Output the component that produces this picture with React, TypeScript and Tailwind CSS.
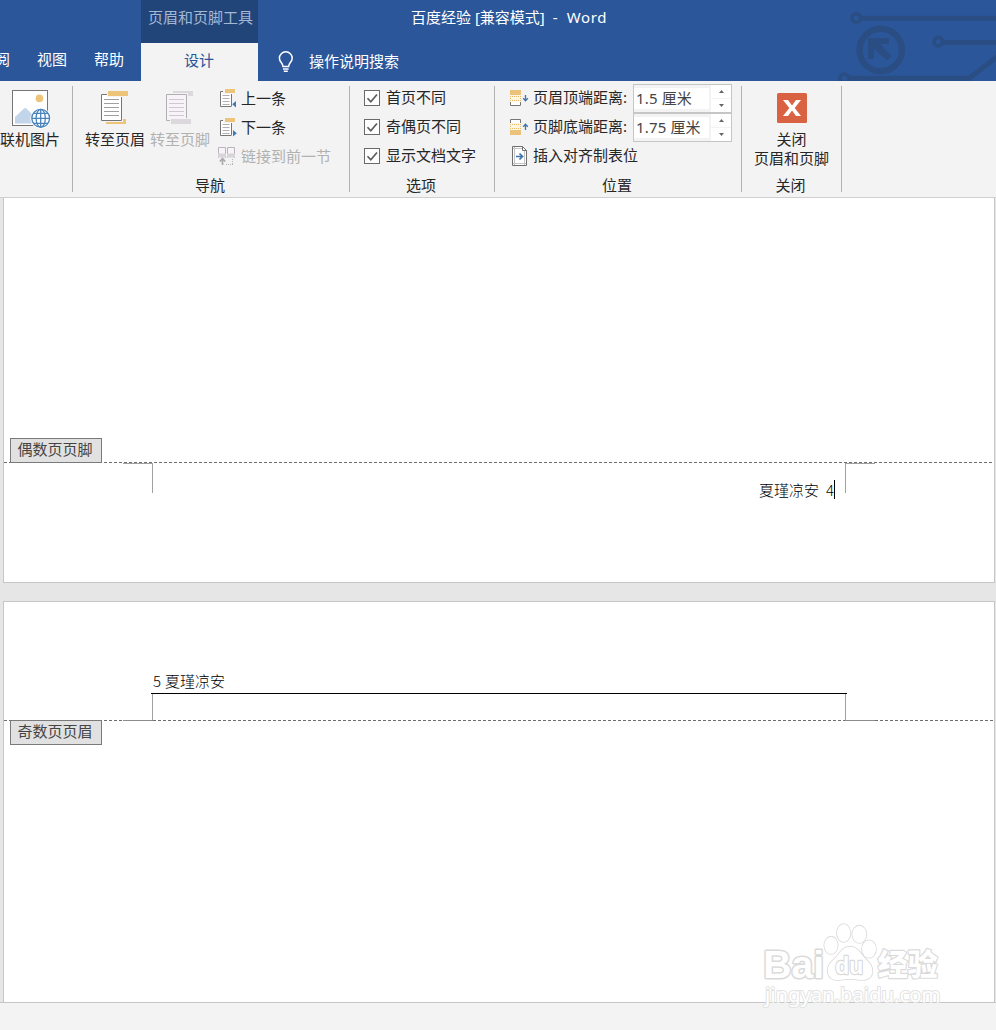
import React from "react";

const FONT = "font-['Noto_Sans','Noto_Sans_CJK_SC',sans-serif]";
const CJK = "font-light font-['Noto_Sans_CJK_SC',sans-serif]";

function Circuit() {
  return (
    <svg className="absolute right-0 top-0" width="160" height="81" viewBox="836 0 160 81" fill="none" stroke="#2a4e84">
      <circle cx="856.3" cy="18" r="4.3" strokeWidth="3.6" />
      <path d="M861 18.3H996" strokeWidth="5" />
      <circle cx="880.7" cy="50" r="21.2" strokeWidth="6.4" />
      <path d="M868 38h21v6h-8.500L891.500 56l-4.500 4.500L874 49v10h-6z" fill="#2a4e84" stroke="none" />
      <circle cx="938.3" cy="41.700" r="4.300" strokeWidth="3.600" />
      <path d="M943 42.500H996" strokeWidth="5" />
      <circle cx="844.300" cy="78.300" r="4.300" strokeWidth="3.600" />
      <path d="M849 78.200H969L998 56" strokeWidth="5" />
    </svg>
  );
}

function Bulb() {
  return (
    <svg width="16" height="22" viewBox="0 0 16 22" fill="none" stroke="#fff" strokeWidth="1.500">
      <path d="M5 15.500C5 12 1.400 11 1.400 7.200a6.400 6.400 0 0 1 12.800 0C14.200 11 10.600 12 10.600 15.500z" />
      <path d="M5 18h5.600M5.800 20.300h4" strokeWidth="1.500" />
    </svg>
  );
}

function OnlinePicture() {
  return (
    <svg width="40" height="40" viewBox="0 0 40 40" fill="none">
      <rect x=".5" y=".5" width="35" height="35" fill="#fff" stroke="#767676" />
      <circle cx="27.400" cy="8.400" r="3.800" fill="#ecc57b" />
      <path d="M3 33.500V27l9-8.500q1.200-.9 2.400 0L21 25v8.500z" fill="#c2d5ea" />
      <circle cx="28.700" cy="28.300" r="10.400" fill="#fff" />
      <g stroke="#4a84bd" strokeWidth="1.300">
        <circle cx="28.700" cy="28.300" r="8.900" />
        <ellipse cx="28.700" cy="28.300" rx="4.600" ry="8.900" />
        <path d="M28.700 19.400v17.800M19.800 28.300h17.800M21.500 23.300h14.400M21.500 33.300h14.400" />
      </g>
    </svg>
  );
}

function GotoHeader() {
  return (
    <svg width="30" height="36" viewBox="0 0 30 36" fill="none">
      <path d="M6 29h20v5H6z" fill="#ecc57b" />
      <path d="M0 3h23v29H0z" fill="#f3f3f3" />
      <path d="M1.500 4.500h20v26h-20z" fill="#fff" stroke="#767676" />
      <path d="M4 9.500h15M4 13.500h15M4 17.500h15M4 21.500h15M4 25.500h15" stroke="#a0a0a0" />
      <path d="M7 0h23v7H7z" fill="#f3f3f3" />
      <path d="M8 1h20v5H8z" fill="#ecc57b" />
    </svg>
  );
}

function GotoFooter() {
  return (
    <svg width="30" height="36" viewBox="0 0 30 36" fill="none">
      <path d="M8 1h20v5H8z" fill="#dcd8dc" />
      <path d="M0 3h23v29H0z" fill="#f3f3f3" />
      <path d="M1.500 4.500h20v26h-20z" fill="#f8f3f9" stroke="#b1aeb1" />
      <path d="M4 9.500h15M4 13.500h15M4 17.500h15M4 21.500h15M4 25.500h15" stroke="#cfc8d2" />
      <path d="M5 28h22v7H5z" fill="#f3f3f3" />
      <path d="M6 29h20v5H6z" fill="#dcd8dc" />
    </svg>
  );
}

function PageStep({ next = false }: { next?: boolean }) {
  return (
    <svg width="18" height="20" viewBox="0 0 18 20" fill="none">
      <path d="M1.500 2.500h11v15h-11z" fill="#fff" stroke="#767676" />
      <path d="M3.500 6.500h7M3.500 9.500h7M3.500 12.500h7M3.500 15.500h7" stroke="#b0b0b0" />
      <path d="M4 0h12v5H4z" fill="#f3f3f3" />
      <path d="M6 0h10v4H6z" fill="#ecc57b" />
      <path d="M12 11h5v8h-5z" fill="#f3f3f3" />
      <path d="M12.500 2.500v15" stroke="#767676" strokeDasharray="0 3 12" />
      <path d={next ? "M14 12v6.500l3.800-3.250z" : "M17 12v6.500l-3.800-3.250z"} fill="#3f7ab5" />
    </svg>
  );
}

function LinkPrevious() {
  return (
    <svg width="18" height="19" viewBox="0 0 18 19" fill="none">
      <path d="M.5 11V.5h7V11M9.500 11V.5h7V11" fill="#f8f3f9" stroke="#b9b4bb" />
      <path d="M0 6.500h8v4H0zM9 6.500h8v4H9z" fill="#d8d4d8" />
      <path d="M4.500 18v-6M1.800 14.500l2.700-3 2.700 3" stroke="#a9a9a9" strokeWidth="1.700" />
      <path d="M8 17.500h7M14.500 17v-5" stroke="#b5b5b5" strokeDasharray="1 1" />
    </svg>
  );
}

function DistanceIcon({ bottom = false }: { bottom?: boolean }) {
  return bottom ? (
    <svg width="19" height="16" viewBox="0 0 19 16" fill="none">
      <path d="M.5 4V.5h10V4" fill="#fff" stroke="#767676" />
      <path d="M0 4h11v7H0z" fill="#fff6e4" />
      <path d="M0 5.500h11M0 9.500h11M.5 5v5M10.500 5v5" stroke="#e6b866" strokeDasharray="1 1" />
      <path d="M0 11h11v5H0z" fill="#ebc27a" />
      <path d="M15.500 11V5.500M13.200 7.800l2.300-2.500 2.300 2.500" stroke="#3f74ad" strokeWidth="1.300" />
    </svg>
  ) : (
    <svg width="19" height="16" viewBox="0 0 19 16" fill="none">
      <path d="M.5 12v3.500h10V12" fill="#fff" stroke="#767676" />
      <path d="M0 5h11v7H0z" fill="#fff6e4" />
      <path d="M0 6.500h11M0 10.500h11M.5 6v5M10.500 6v5" stroke="#e6b866" strokeDasharray="1 1" />
      <path d="M0 0h11v5H0z" fill="#ebc27a" />
      <path d="M15.500 5v5.500M13.200 8.200l2.300 2.500 2.300-2.500" stroke="#3f74ad" strokeWidth="1.300" />
    </svg>
  );
}

function TabIcon() {
  return (
    <svg width="16" height="20" viewBox="0 0 16 20" fill="none">
      <path d="M.5.5h10l4 4v15H.5z" fill="#fff" stroke="#6f6f6f" />
      <path d="M10.500.5v4h4" stroke="#6f6f6f" />
      <path d="M2.500 1v18M12.500 5v14M1 2.500h9M1 17.500h13" stroke="#c4c4c4" />
      <path d="M4 10.500h6M7.500 7.500l3 3-3 3" stroke="#3f74ad" strokeWidth="1.700" />
    </svg>
  );
}

function Check({ label }: { label: string }) {
  return (
    <div className="flex h-[29px] items-center gap-[6px]">
      <svg width="16" height="16" viewBox="0 0 16 16" fill="none">
        <rect x=".5" y=".5" width="15" height="15" fill="#fff" stroke="#6a6a6a" />
        <path d="M3.500 8.200l3.300 3.600 6.200-7.300" stroke="#5c5c5c" strokeWidth="1.700" />
      </svg>
      <span>{label}</span>
    </div>
  );
}

function Spinner({ value }: { value: string }) {
  return (
    <div className="flex h-[29px] w-[99px] border border-[#c6c6c6] bg-[#f3f3f3]">
      <div className="my-[3px] flex w-[75px] items-center bg-white pb-px pl-[2px] tracking-[0.15px] text-[#444]">{value}</div>
      <div className="ml-[2px] flex flex-1 flex-col gap-px">
        <div className="flex flex-1 items-center justify-center bg-white">
          <svg width="5" height="3" viewBox="0 0 5 3"><path d="M0 3L2.500 0 5 3z" fill="#666" /></svg>
        </div>
        <div className="flex flex-1 items-center justify-center bg-white">
          <svg width="5" height="3" viewBox="0 0 5 3"><path d="M0 0L2.500 3 5 0z" fill="#666" /></svg>
        </div>
      </div>
    </div>
  );
}

function Group({ className, label, children }: { className: string; label?: string; children: React.ReactNode }) {
  return (
    <section className={`flex h-[106px] shrink-0 flex-col border-r border-[#b1b1b1] ${className}`}>
      <div className="flex h-[88px] shrink-0">{children}</div>
      <div className="mt-[2px] flex h-[19px] shrink-0 items-center justify-center pr-[2px]">{label}</div>
    </section>
  );
}

function Dashes() {
  return <div className="h-px w-full bg-[repeating-linear-gradient(90deg,#6e6e6e_0_3px,#ffffff_3px_5px)]" />;
}

function Tag({ label }: { label: string }) {
  return (
    <div className="ml-[6px] flex h-[25px] w-[92px] items-center justify-center border border-[#7a7a7a] bg-[#e1e1e1] pb-[2px] pr-[2px] text-[#444]">
      {label}
    </div>
  );
}

function Watermark() {
  return (
    <svg className="absolute left-[740px] top-[900px]" width="256" height="130" viewBox="0 0 768 390" fill="#fff" stroke="#dadada" strokeWidth="5" strokeLinejoin="round">
      <g paintOrder="stroke" fontFamily="Liberation Sans" fontWeight="700">
        <text x="70" y="234" fontSize="116" textLength="182" lengthAdjust="spacingAndGlyphs" strokeWidth="9">Bai</text>
        <ellipse cx="273" cy="136" rx="20" ry="26" />
        <ellipse cx="311" cy="99" rx="20" ry="27" />
        <ellipse cx="358" cy="103" rx="21" ry="26" />
        <ellipse cx="387" cy="147" rx="21" ry="26" />
        <path d="M330 140C352 140 362 160 374 174C386 186 398 196 397 216C395 238 374 242 356 239C338 236 322 236 304 239C284 242 264 238 263 212C263 194 276 184 288 172C300 158 308 140 330 140z" />
        <text x="286" y="223" fontSize="72" textLength="84" lengthAdjust="spacingAndGlyphs" strokeWidth="7">du</text>
        <text x="413" y="226" fontSize="90" fontFamily="Noto Sans CJK SC" fontWeight="900" strokeWidth="7">经验</text>
        <text x="75" y="307" fontSize="61" fontFamily="Noto Sans" fontWeight="400" textLength="526" lengthAdjust="spacingAndGlyphs" stroke="#e2e2e2" strokeWidth="6">jingyan.baidu.com</text>
      </g>
    </svg>
  );
}

export default function App() {
  return (
    <div className={`relative flex h-[1030px] w-[996px] flex-col overflow-hidden whitespace-nowrap bg-[#e6e6e6] text-[15px] leading-[19px] text-[#262626] ${FONT}`}>
      <header className="relative flex h-[81px] shrink-0 bg-[#2b579a] text-white">
        <Circuit />
        <nav className="flex h-[41px] w-[141px] items-center gap-[27px] self-end overflow-hidden pb-[2px]">
          <span className="-ml-[5px]">阅</span>
          <span>视图</span>
          <span>帮助</span>
        </nav>
        <div className="flex w-[117px] flex-col">
          <div className="flex h-[43px] justify-center bg-[#224579] pl-[2px] pt-[8px] text-[#a5b8d5]">页眉和页脚工具</div>
          <div className="flex flex-1 items-center justify-center bg-[#f3f3f3] pb-[3px] pr-px text-[#2b579a]">设计</div>
        </div>
        <div className="flex flex-1 flex-col">
          <div className="flex h-[43px] whitespace-pre pl-[153px] pt-[8px]">
            <span>百度经验 [兼容模式]</span>
            <span className="ml-[8px]">-</span>
            <span className="ml-[9px] tracking-[0.7px]">Word</span>
          </div>
          <div className="flex flex-1 items-center gap-[15px] pb-[1px] pl-[20px]">
            <Bulb />
            <span className="-mt-px">操作说明搜索</span>
          </div>
        </div>
      </header>

      <div className="flex h-[117px] shrink-0 border-b border-[#cfcfcf] bg-[#f3f3f3] pt-[5px]">
        <Group className="w-[73px]">
          <div className="flex flex-col pt-[4px]">
            <div className="pl-[12px]"><OnlinePicture /></div>
            <span>联机图片</span>
          </div>
        </Group>
        <Group className="w-[277px]" label="导航">
          <div className="flex w-[65px] flex-col items-center pl-[19px] pt-[4px]">
            <GotoHeader />
            <span className="mt-[4px]">转至页眉</span>
          </div>
          <div className="flex w-[68px] flex-col items-center pl-[16px] pt-[4px] text-[#b1b1b1]">
            <GotoFooter />
            <span className="mt-[4px]">转至页脚</span>
          </div>
          <div className="-mt-px flex flex-col pl-[12px]">
            <div className="flex h-[28px] items-center gap-[4px] pl-[1px]"><PageStep /><span className="-mt-px">上一条</span></div>
            <div className="flex h-[29px] items-center gap-[4px] pl-[1px]"><PageStep next /><span>下一条</span></div>
            <div className="flex h-[29px] items-center gap-[5px] text-[#b1b1b1]"><LinkPrevious /><span>链接到前一节</span></div>
          </div>
        </Group>
        <Group className="w-[145px]" label="选项">
          <div className="-mt-[3px] pl-[14px]">
            <Check label="首页不同" />
            <Check label="奇偶页不同" />
            <Check label="显示文档文字" />
          </div>
        </Group>
        <Group className="w-[247px]" label="位置">
          <div className="-mt-[2px] pl-[15px]">
            <div className="flex h-[29px] items-center">
              <span className="-mt-[2px] flex items-center"><DistanceIcon /><span className="ml-[4px] w-[100px]">页眉顶端距离:</span></span>
              <Spinner value="1.5 厘米" />
            </div>
            <div className="flex h-[29px] items-center">
              <span className="-mt-[2px] flex items-center"><DistanceIcon bottom /><span className="ml-[4px] w-[100px]">页脚底端距离:</span></span>
              <Spinner value="1.75 厘米" />
            </div>
            <div className="-mt-px flex h-[29px] items-center gap-[5px] pl-[2px]"><TabIcon /><span>插入对齐制表位</span></div>
          </div>
        </Group>
        <Group className="w-[100px]" label="关闭">
          <div className="flex w-full flex-col items-center pt-[7px]">
            <svg width="30" height="30" viewBox="0 0 30 30">
              <rect width="30" height="30" rx="1.500" fill="#d96243" />
              <path d="M6 7h5l4 5.500L19 7h5l-6.300 8L24 23h-5l-4-5.500L11 23H6l6.300-8z" fill="#fff" />
            </svg>
            <span className="mt-[7px]">关闭</span>
            <span>页眉和页脚</span>
          </div>
        </Group>
      </div>

      <main className="flex flex-1 flex-col pl-[3px] pr-px">
        <section className="flex h-[385px] shrink-0 flex-col border-x border-b border-[#c6c6c6] bg-white pt-[240px]">
          <Tag label="偶数页页脚" />
          <div className="-mt-px flex h-px">
            <div className="w-[6px]"><Dashes /></div>
            <div className="ml-[94px] flex-1"><Dashes /></div>
          </div>
          <div className="flex h-[30px] justify-between pl-[119px] pr-[119px]">
            <div className="w-[30px] border-r border-t border-[#a0a0a0]" />
            <div className="w-[30px] border-l border-t border-[#a0a0a0]" />
          </div>
          <div className={`-mt-[13px] flex items-center justify-end pr-[159px] text-black ${CJK}`}>
            <span>夏瑾凉安</span>
            <span className="ml-[7px]">4</span>
            <span className="h-[19px] w-px bg-black" />
          </div>
        </section>
        <section className="mt-[18px] flex h-[401px] shrink-0 flex-col border-x border-t border-[#c6c6c6] bg-white">
          <div className={`flex h-[91px] items-end gap-[4px] pb-[3px] pl-[149px] text-black ${CJK}`}>
            <span>5</span>
            <span>夏瑾凉安</span>
          </div>
          <div className="ml-[147px] h-px w-[696px] bg-black" />
          <div className="flex h-[26px] justify-between pl-[148px] pr-[148px]">
            <div className="w-px bg-[#a0a0a0]" />
            <div className="w-px bg-[#a0a0a0]" />
          </div>
          <div className="flex h-px">
            <div className="w-[119px]"><Dashes /></div>
            <div className="w-[30px] bg-[#8c8c8c]" />
            <div className="w-[692px]"><Dashes /></div>
            <div className="w-[30px] bg-[#8c8c8c]" />
            <div className="flex-1"><Dashes /></div>
          </div>
          <div className="-mt-px"><Tag label="奇数页页眉" /></div>
        </section>
      </main>
      <footer className="h-[28px] shrink-0 border-t border-[#c6c6c6] bg-[#f3f3f3]" />
      <Watermark />
    </div>
  );
}
